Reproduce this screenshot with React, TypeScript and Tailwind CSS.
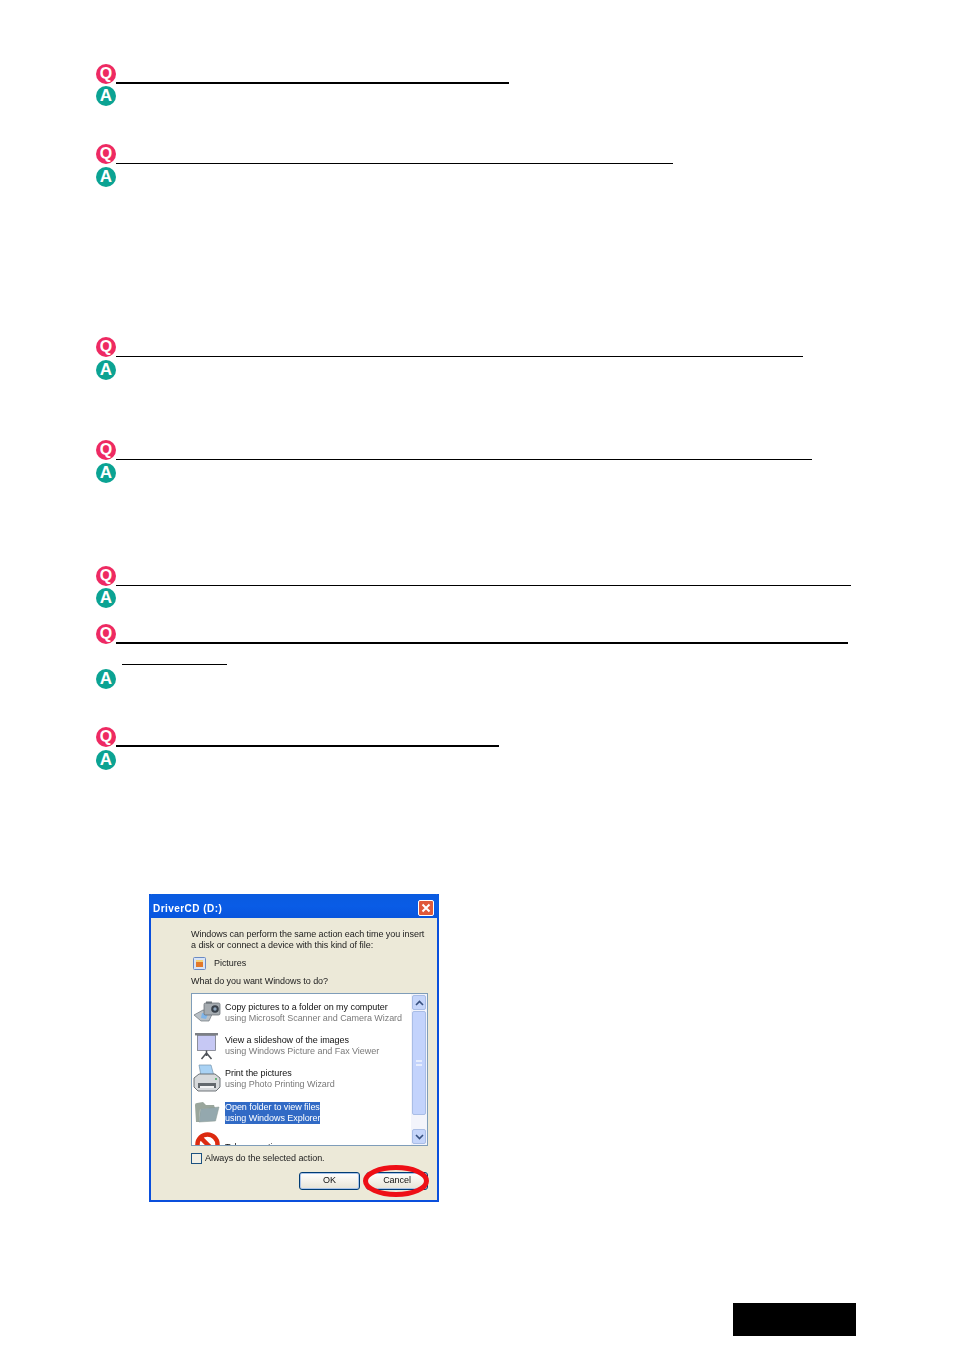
import React from "react";

function Badge({ kind }: { kind: "Q" | "A" }) {
  const cls = kind === "Q" ? "bg-[#ee2a62] text-[16px]" : "bg-[#0ba393] text-[17px]";
  return (
    <span className={`flex h-5 w-5 shrink-0 items-center justify-center rounded-full pb-[1px] ${cls} font-['Liberation_Sans',sans-serif] font-bold leading-none text-white`}>
      {kind}
    </span>
  );
}

type Qa = { top: string; w: string; h: string; answerGap: string; extra?: boolean };

const rows: Qa[] = [
  { top: "mt-0", w: "w-[393px]", h: "h-[2px]", answerGap: "mt-[2px]" },
  { top: "mt-[38px]", w: "w-[557px]", h: "h-px", answerGap: "mt-[3px]" },
  { top: "mt-[150px]", w: "w-[687px]", h: "h-px", answerGap: "mt-[3px]" },
  { top: "mt-[60px]", w: "w-[696px]", h: "h-px", answerGap: "mt-[3px]" },
  { top: "mt-[83px]", w: "w-[735px]", h: "h-px", answerGap: "mt-[2px]" },
  { top: "mt-[16px]", w: "w-[732px]", h: "h-[2px]", answerGap: "mt-[4px]", extra: true },
  { top: "mt-[38px]", w: "w-[383px]", h: "h-[2px]", answerGap: "mt-[3px]" },
];

function CameraIcon() {
  return (
    <svg width="28" height="26" viewBox="0 0 28 26">
      <path d="M1 15 L10 10 L20 12 L16 21 L8 21 Z" fill="#b9c0c6" stroke="#6b7278" strokeWidth="0.7" />
      <path d="M9 13 L15 14 L13 19 L8 18 Z" fill="#7fb4e8" />
      <rect x="11" y="3" width="16" height="12" rx="1.5" fill="#a5abb0" stroke="#5e656b" strokeWidth="0.7" />
      <rect x="13" y="1.5" width="6" height="2" fill="#6f767c" />
      <circle cx="22" cy="9" r="3.8" fill="#39414a" />
      <circle cx="22" cy="9" r="1.7" fill="#8fa6bd" />
    </svg>
  );
}

function ScreenIcon() {
  return (
    <svg width="28" height="28" viewBox="0 0 28 28">
      <rect x="2" y="1" width="23" height="2.4" fill="#7c7f85" />
      <rect x="4.5" y="3.4" width="18" height="15" fill="#c6c8f4" stroke="#777b86" strokeWidth="0.8" />
      <path d="M13.5 18.5 V24 M13.5 21 L8.5 27 M13.5 21 L18.5 27" stroke="#4e5258" strokeWidth="1.5" fill="none" />
    </svg>
  );
}

function PrinterIcon() {
  return (
    <svg width="28" height="29" viewBox="0 0 28 29">
      <path d="M6 1 L18 1 L21 12 L8 12 Z" fill="#a9d2f4" stroke="#7595ad" strokeWidth="0.7" />
      <path d="M1 14 L6 10 L22 10 L27 14 L27 23 L23 27 L5 27 L1 23 Z" fill="#d7dadc" stroke="#60666b" strokeWidth="0.9" />
      <rect x="5" y="19" width="18" height="5" fill="#63696e" />
      <rect x="7" y="22" width="14" height="2" fill="#f2f3f4" />
      <circle cx="23" cy="15" r="0.9" fill="#35a04a" />
    </svg>
  );
}

function FolderIcon() {
  return (
    <svg width="26" height="23" viewBox="0 0 26 23">
      <path d="M2 22 L1 5 Q1 3 3 3 L9 2 L12 5 L20 5 L21 8 L6 9 L5 22 Z" fill="#9aa69c" />
      <path d="M5 22 L6.5 9 L25 7 L21.5 21 Z" fill="#94a8ae" stroke="#87978f" strokeWidth="0.5" />
    </svg>
  );
}

function PicturesIcon() {
  return (
    <svg width="13" height="13" viewBox="0 0 13 13">
      <rect x="0.5" y="0.5" width="12" height="12" rx="1" fill="#d9e4f5" stroke="#6a8bc4" />
      <rect x="3" y="4" width="7" height="6" fill="#e2792a" />
      <rect x="3" y="3" width="7" height="2" fill="#f3d27a" />
    </svg>
  );
}

function BlockIcon() {
  return (
    <svg width="25" height="25" viewBox="0 0 25 25">
      <circle cx="12.5" cy="12.5" r="10" fill="#fff" stroke="#dc2a10" strokeWidth="4.5" />
      <path d="M5.5 5.5 L19.5 19.5" stroke="#dc2a10" strokeWidth="4.5" />
    </svg>
  );
}

function ListItem({ icon, a, b, selected }: { icon: React.ReactNode; a: string; b?: string; selected?: boolean }) {
  return (
    <div className="flex h-[33px] shrink-0 items-center whitespace-nowrap">
      <div className="flex w-[33px] shrink-0 justify-center pr-[3px]">{icon}</div>
      {selected ? (
        <div className="mt-[2px] bg-[#316ac5] text-white leading-[11px]">
          <div>{a}</div>
          <div>{b}</div>
        </div>
      ) : (
        <div className={b ? "leading-[11px]" : "pt-[6px] leading-[11px]"}>
          <div className="text-[#111]">{a}</div>
          {b && <div className="text-[#7a7a7a]">{b}</div>}
        </div>
      )}
    </div>
  );
}

function Arrow({ up }: { up?: boolean }) {
  return (
    <div className="flex h-[15px] shrink-0 items-center justify-center rounded-[2px] border border-[#a9bde6] bg-[#c5d5fa]">
      <svg width="9" height="6" viewBox="0 0 9 6">
        <path d={up ? "M1 5 L4.5 1.5 L8 5" : "M1 1 L4.5 4.5 L8 1"} stroke="#37507f" strokeWidth="1.6" fill="none" />
      </svg>
    </div>
  );
}

function XpButton({ label, cls }: { label: string; cls: string }) {
  return (
    <div className={`flex h-[18px] items-center justify-center rounded-[3px] border border-[#003c74] bg-gradient-to-b from-white to-[#e6e3d6] text-[#111] shadow-[inset_0_0_0_1px_#a9c3ea] ${cls}`}>
      {label}
    </div>
  );
}

function Dialog() {
  return (
    <div className="relative ml-[53px] mt-[124px] h-[308px] w-[290px] border-2 border-t-0 border-[#0a4fdc] bg-[#ece9d8] font-['Liberation_Sans',sans-serif] text-[9px] tracking-[-0.05px] text-[#222] blur-[0.25px]">
      <div className="-mx-[2px] flex h-[24px] items-center justify-between rounded-t-[3px] bg-gradient-to-b from-[#0a5be0] via-[#0a5ce6] to-[#0855dd] pl-[4px] pr-[5px] pt-[3px]">
        <span className="pt-[2px] text-[10px] font-bold tracking-[0.45px] text-white">DriverCD (D:)</span>
        <span className="flex h-4 w-4 items-center justify-center rounded-[2px] border border-white bg-[#e0593a]">
          <svg width="10" height="10" viewBox="0 0 10 10">
            <path d="M1.5 1.5 L8.5 8.5 M8.5 1.5 L1.5 8.5" stroke="#fff" strokeWidth="2" />
          </svg>
        </span>
      </div>
      <div className="pl-[40px] pr-[9px] pt-[11px]">
        <div className="whitespace-nowrap leading-[11px]">
          <div>Windows can perform the same action each time you insert</div>
          <div>a disk or connect a device with this kind of file:</div>
        </div>
        <div className="mt-[6px] flex h-[13px] items-center gap-[8px] pl-[2px]">
          <PicturesIcon />
          <span>Pictures</span>
        </div>
        <div className="mt-[6px] leading-[11px]">What do you want Windows to do?</div>
        <div className="mt-[6px] flex h-[153px] w-[237px] overflow-hidden border border-[#7f9db9] bg-white">
          <div className="flex-1 overflow-hidden pt-[2px]">
            <div className="flex flex-col">
              <ListItem icon={<CameraIcon />} a="Copy pictures to a folder on my computer" b="using Microsoft Scanner and Camera Wizard" />
              <ListItem icon={<ScreenIcon />} a="View a slideshow of the images" b="using Windows Picture and Fax Viewer" />
              <ListItem icon={<PrinterIcon />} a="Print the pictures" b="using Photo Printing Wizard" />
              <ListItem icon={<FolderIcon />} a="Open folder to view files" b="using Windows Explorer" selected />
              <ListItem icon={<BlockIcon />} a="Take no action" />
            </div>
          </div>
          <div className="flex w-[16px] shrink-0 flex-col bg-[#f3f4fb] p-px">
            <Arrow up />
            <div className="my-px flex flex-1 items-center justify-center rounded-[2px] border border-[#a9bde6] bg-[#c3d3fc]">
              <div className="h-[6px] w-[6px] border-y-2 border-[#e6edfd]" />
            </div>
            <div className="h-[13px]" />
            <Arrow />
          </div>
        </div>
        <div className="mt-[7px] flex h-[11px] items-center gap-[3px]">
          <div className="h-[11px] w-[11px] border border-[#1c5180] bg-[#f1efe5]" />
          <span>Always do the selected action.</span>
        </div>
        <div className="mt-[8px] flex justify-end gap-[6px]">
          <XpButton label="OK" cls="w-[61px]" />
          <XpButton label="Cancel" cls="w-[62px]" />
        </div>
      </div>
      <svg className="absolute left-[211px] top-[270px]" width="68" height="34" viewBox="0 0 68 34">
        <ellipse cx="34" cy="17" rx="30.5" ry="13.5" fill="none" stroke="#ee0f16" strokeWidth="5" />
      </svg>
    </div>
  );
}

export default function App() {
  return (
    <div className="min-h-[1352px] w-[953px] bg-white pl-[96px] pt-[64px]">
      {rows.map((r, i) => (
        <div key={i} className={r.top}>
          <div className="flex items-end">
            <Badge kind="Q" />
            <div className={`${r.w} ${r.h} bg-black`} />
          </div>
          {r.extra && <div className="ml-[26px] mt-[20px] h-px w-[105px] bg-black" />}
          <div className={r.answerGap}>
            <Badge kind="A" />
          </div>
        </div>
      ))}
      <Dialog />
      <div className="ml-[637px] mt-[101px] h-[33px] w-[123px] bg-black" />
    </div>
  );
}
